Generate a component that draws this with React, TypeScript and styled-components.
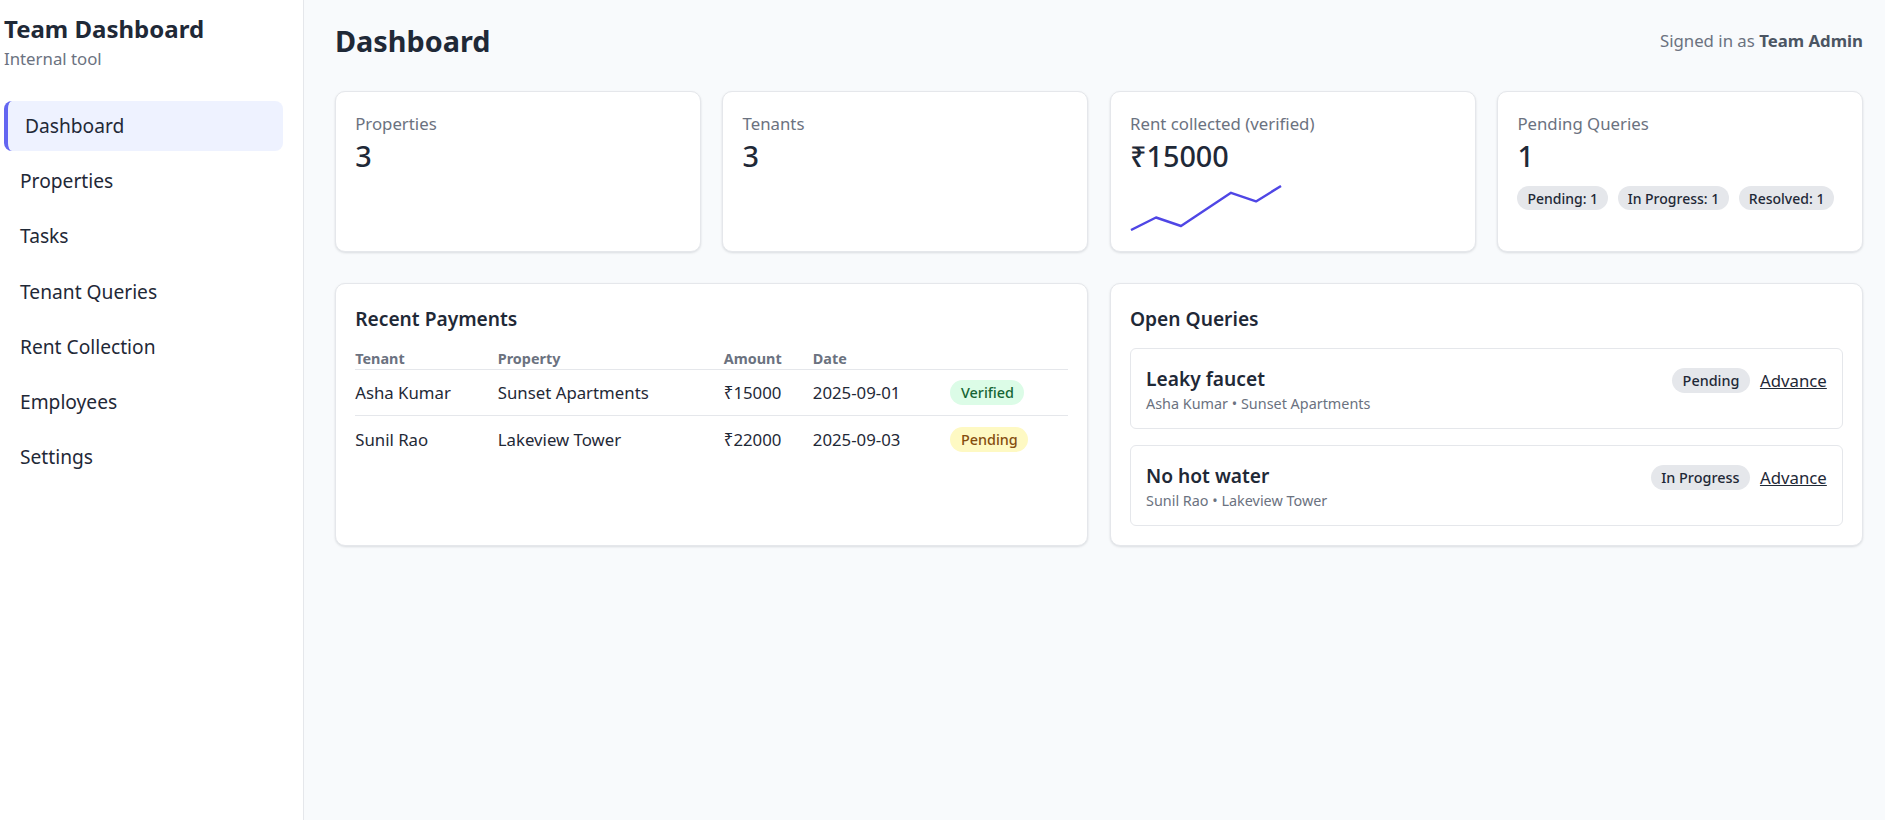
import React from 'react';
import styled, { createGlobalStyle } from 'styled-components';

const Global = createGlobalStyle`
  html, body { margin: 0; padding: 0; }
  body {
    font-family: "Segoe UI", "Noto Sans", sans-serif;
    color: #1f2937;
    background: #f8fafc;
  }
  * { box-sizing: border-box; }
`;

const Layout = styled.div`
  display: flex;
  min-height: 820px;
`;

const Sidebar = styled.aside`
  width: 304px;
  flex-shrink: 0;
  background: #ffffff;
  border-right: 1px solid #e5e7eb;
  padding: 14px 20px 0 4px;
`;

const Brand = styled.div`
  font-size: 24px;
  font-weight: 700;
  line-height: 30px;
  color: #1f2937;
`;

const BrandSub = styled.div`
  margin-top: 3px;
  font-size: 16.8px;
  line-height: 23.5px;
  color: #6b7280;
`;

const Nav = styled.nav`
  margin-top: 30px;
  display: flex;
  flex-direction: column;
  gap: 5.2px;
`;

const NavItem = styled.a<{ $active?: boolean }>`
  display: flex;
  align-items: center;
  height: 50px;
  padding-left: ${(p) => (p.$active ? '17px' : '16px')};
  border-radius: 8px;
  font-size: 19.2px;
  color: #1f2937;
  text-decoration: none;
  background: ${(p) => (p.$active ? '#eef2ff' : 'transparent')};
  border-left: ${(p) => (p.$active ? '4px solid #6366f1' : 'none')};
`;

const Main = styled.main`
  flex: 1;
  padding: 19px 22px 24px 31px;
`;

const Header = styled.header`
  display: flex;
  justify-content: space-between;
  align-items: center;
  height: 43px;
`;

const Title = styled.h1`
  margin: 0;
  font-size: 28.8px;
  line-height: 43px;
  font-weight: 700;
  color: #1f2937;
`;

const SignedIn = styled.div`
  font-size: 16.8px;
  line-height: 25.2px;
  color: #6b7280;
  b { color: #4b5563; font-weight: 700; }
`;

const StatGrid = styled.section`
  margin-top: 28.5px;
  display: grid;
  grid-template-columns: repeat(4, 1fr);
  gap: 21.6px;
`;

const Card = styled.div`
  background: #ffffff;
  border: 1px solid #e5e7eb;
  border-radius: 10px;
  box-shadow: 0 1px 3px rgba(15, 23, 42, 0.08), 0 1px 2px rgba(15, 23, 42, 0.05);
  padding: 19.2px;
`;

const StatLabel = styled.div`
  font-size: 16.8px;
  line-height: 26.9px;
  color: #6b7280;
`;

const StatValue = styled.div`
  font-size: 28.8px;
  line-height: 36.8px;
  font-weight: 500;
  color: #1f2937;
`;

const Spark = styled.svg`
  display: block;
  margin-top: 11px;
`;

const ChipRow = styled.div`
  margin-top: 11.8px;
  display: flex;
  gap: 9.6px;
`;

const Chip = styled.span`
  display: inline-flex;
  align-items: center;
  height: 24px;
  padding: 0 10px;
  border-radius: 999px;
  background: #e5e7eb;
  color: #1f2937;
  font-size: 14px;
  font-weight: 500;
`;

const PanelGrid = styled.section`
  margin-top: 31px;
  display: grid;
  grid-template-columns: 1fr 1fr;
  gap: 21.6px;
  align-items: stretch;
`;

const PanelTitle = styled.h2`
  margin: 0;
  padding-top: 2px;
  font-size: 19.2px;
  line-height: 28.8px;
  font-weight: 600;
  color: #1f2937;
`;

const Table = styled.div`
  margin-top: 15.2px;
`;

const cols = '142.6px 226px 89px 137.7px 1fr';

const HeadRow = styled.div`
  display: grid;
  grid-template-columns: ${cols};
  height: 21px;
  border-bottom: 1px solid #e5e7eb;
  font-size: 14.4px;
  line-height: 20px;
  font-weight: 700;
  color: #6b7280;
`;

const BodyRow = styled.div<{ $last?: boolean }>`
  display: grid;
  grid-template-columns: ${cols};
  align-items: center;
  height: 46px;
  padding-top: 1px;
  border-bottom: ${(p) => (p.$last ? 'none' : '1px solid #e5e7eb')};
  font-size: 16.8px;
  line-height: 25.2px;
  color: #1f2937;
`;

const StatusBadge = styled.span<{ $tone: 'green' | 'yellow' | 'gray' }>`
  display: inline-flex;
  align-items: center;
  justify-self: start;
  height: 25px;
  padding: 0 10.5px;
  border-radius: 999px;
  font-size: 14.4px;
  font-weight: 500;
  background: ${(p) => (p.$tone === 'green' ? '#dcfce7' : p.$tone === 'yellow' ? '#fef9c3' : '#e5e7eb')};
  color: ${(p) => (p.$tone === 'green' ? '#166534' : p.$tone === 'yellow' ? '#854d0e' : '#1f2937')};
`;

const QueryList = styled.div`
  margin-top: 14.3px;
  display: flex;
  flex-direction: column;
  gap: 16px;
`;

const QueryItem = styled.div`
  display: flex;
  justify-content: space-between;
  align-items: flex-start;
  border: 1px solid #e5e7eb;
  border-radius: 6px;
  padding: 14.4px 15px 14.4px 15px;
`;

const QueryTitle = styled.div`
  padding-top: 1.5px;
  font-size: 19.2px;
  line-height: 28.8px;
  font-weight: 600;
  color: #1f2937;
`;

const QueryMeta = styled.div`
  font-size: 14.4px;
  line-height: 20.1px;
  color: #6b7280;
`;

const QueryActions = styled.div`
  display: flex;
  align-items: center;
  gap: 10px;
  height: 28.8px;
  margin-top: 3px;
`;

const QueryBadge = styled.span`
  display: inline-flex;
  align-items: center;
  height: 24.7px;
  padding: 0 10.5px;
  border-radius: 999px;
  background: #e5e7eb;
  color: #1f2937;
  font-size: 14.4px;
  font-weight: 500;
`;

const AdvanceLink = styled.a`
  font-size: 16.8px;
  color: #1f2937;
  text-decoration: underline;
  cursor: pointer;
`;

const navItems = ['Dashboard', 'Properties', 'Tasks', 'Tenant Queries', 'Rent Collection', 'Employees', 'Settings'];

const payments = [
  { tenant: 'Asha Kumar', property: 'Sunset Apartments', amount: '₹15000', date: '2025-09-01', status: 'Verified', tone: 'green' as const },
  { tenant: 'Sunil Rao', property: 'Lakeview Tower', amount: '₹22000', date: '2025-09-03', status: 'Pending', tone: 'yellow' as const },
];

const queries = [
  { title: 'Leaky faucet', meta: 'Asha Kumar • Sunset Apartments', status: 'Pending' },
  { title: 'No hot water', meta: 'Sunil Rao • Lakeview Tower', status: 'In Progress' },
];

export default function App() {
  return (
    <>
      <Global />
      <Layout>
        <Sidebar>
          <Brand>Team Dashboard</Brand>
          <BrandSub>Internal tool</BrandSub>
          <Nav>
            {navItems.map((n, i) => (
              <NavItem key={n} $active={i === 0}>{n}</NavItem>
            ))}
          </Nav>
        </Sidebar>
        <Main>
          <Header>
            <Title>Dashboard</Title>
            <SignedIn>Signed in as <b>Team Admin</b></SignedIn>
          </Header>

          <StatGrid>
            <Card>
              <StatLabel>Properties</StatLabel>
              <StatValue>3</StatValue>
            </Card>
            <Card>
              <StatLabel>Tenants</StatLabel>
              <StatValue>3</StatValue>
            </Card>
            <Card>
              <StatLabel>Rent collected (verified)</StatLabel>
              <StatValue>₹15000</StatValue>
              <Spark width="152" height="46" viewBox="0 0 152 46">
                <polyline
                  points="1,45 26,32.5 51,41 101,7.8 126,16.4 151,1"
                  fill="none"
                  stroke="#4f46e5"
                  strokeWidth="2.4"
                  strokeLinejoin="round"
                />
              </Spark>
            </Card>
            <Card>
              <StatLabel>Pending Queries</StatLabel>
              <StatValue>1</StatValue>
              <ChipRow>
                <Chip>Pending: 1</Chip>
                <Chip>In Progress: 1</Chip>
                <Chip>Resolved: 1</Chip>
              </ChipRow>
            </Card>
          </StatGrid>

          <PanelGrid>
            <Card>
              <PanelTitle>Recent Payments</PanelTitle>
              <Table>
                <HeadRow>
                  <span>Tenant</span>
                  <span>Property</span>
                  <span>Amount</span>
                  <span>Date</span>
                  <span />
                </HeadRow>
                {payments.map((p, i) => (
                  <BodyRow key={p.tenant} $last={i === payments.length - 1}>
                    <span>{p.tenant}</span>
                    <span>{p.property}</span>
                    <span>{p.amount}</span>
                    <span>{p.date}</span>
                    <StatusBadge $tone={p.tone}>{p.status}</StatusBadge>
                  </BodyRow>
                ))}
              </Table>
            </Card>
            <Card>
              <PanelTitle>Open Queries</PanelTitle>
              <QueryList>
                {queries.map((q) => (
                  <QueryItem key={q.title}>
                    <div>
                      <QueryTitle>{q.title}</QueryTitle>
                      <QueryMeta>{q.meta}</QueryMeta>
                    </div>
                    <QueryActions>
                      <QueryBadge>{q.status}</QueryBadge>
                      <AdvanceLink>Advance</AdvanceLink>
                    </QueryActions>
                  </QueryItem>
                ))}
              </QueryList>
            </Card>
          </PanelGrid>
        </Main>
      </Layout>
    </>
  );
}
